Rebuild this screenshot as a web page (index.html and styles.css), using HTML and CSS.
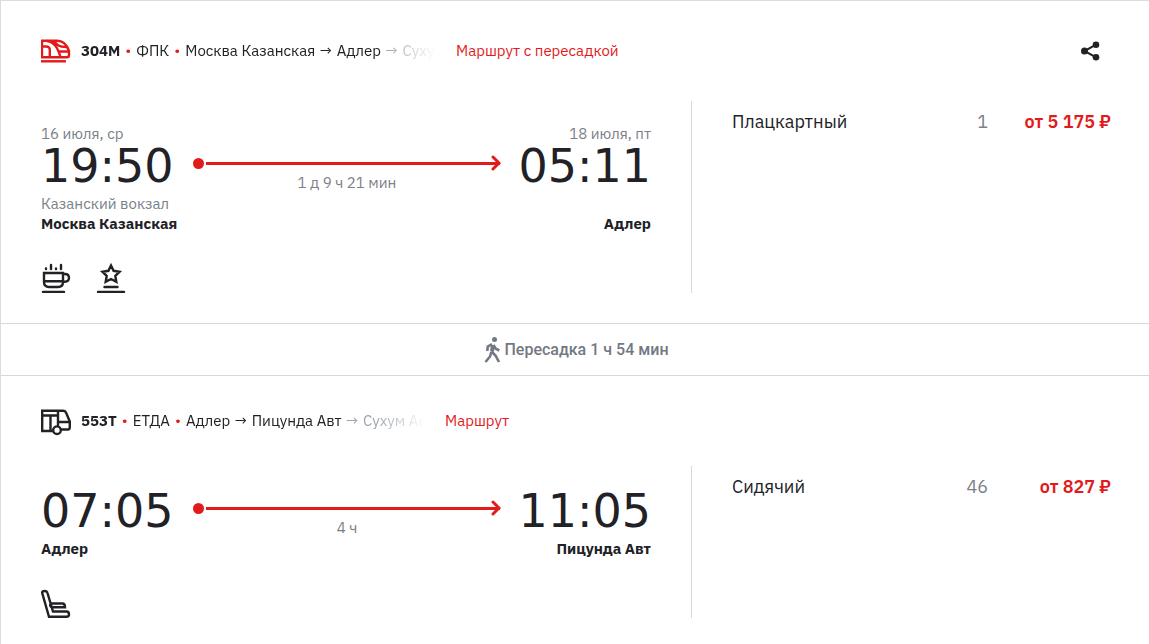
FILE: index.html
```html
<!DOCTYPE html>
<html lang="ru">
<head>
    <meta charset="UTF-8">
    <meta name="viewport" content="width=device-width, initial-scale=1.0">
    <title>Маршрут с пересадкой</title>
    <link rel="stylesheet" href="styles.css">
</head>
<body>
    <main class="trip">
        <section class="card">
            <header class="card-header">
                <svg class="icon icon-red" viewBox="0 0 30 30" aria-hidden="true">
                    <path d="M1 4.7H16C23 4.7 26 9 28 15V19Q28 21.3 26 21.3H1Z"/>
                    <path d="M1 10.5H5Q8.8 10.5 8.8 14V21M6 5C14 6 17 13 19.5 21M13 5C16 9 18 11 25 11M18 15.5H28"/>
                    <path d="M0 25.3H25"/>
                </svg>
                <div class="route">
                    <b>304М</b><i class="dot">•</i><span>ФПК</span><i class="dot">•</i><span>Москва Казанская <span class="arrow">→</span> Адлер <span class="rest"><span class="arrow">→</span> Сухум</span></span>
                </div>
                <a href="#" class="route-link">Маршрут с пересадкой</a>
                <button class="share" aria-label="Поделиться">
                    <svg viewBox="0 0 20 20" aria-hidden="true">
                        <path d="M15 3.7L3.5 10L15 16.3"/>
                        <circle cx="15" cy="3.7" r="3.3"/>
                        <circle cx="3.5" cy="10" r="3.5"/>
                        <circle cx="15" cy="16.3" r="3.3"/>
                    </svg>
                </button>
            </header>
            <div class="card-body">
                <div class="info">
                    <div class="schedule">
                        <span class="date">16 июля, ср</span>
                        <span class="date end">18 июля, пт</span>
                        <time class="time">19:50</time>
                        <div class="duration">
                            <div class="line"><svg viewBox="0 0 11 16" aria-hidden="true"><path d="M3 2L9 8L3 14"/></svg></div>
                            <span>1 д 9 ч 21 мин</span>
                        </div>
                        <time class="time end">05:11</time>
                        <div class="station"><span>Казанский вокзал</span><b>Москва Казанская</b></div>
                        <div class="station end"><b>Адлер</b></div>
                    </div>
                    <div class="services">
                        <svg class="icon" viewBox="0 0 30 30" aria-hidden="true">
                            <path d="M3 10H22V19Q22 24 17 24H8Q3 24 3 19ZM3 18.3H22M22 11H24Q28 11 28 15Q28 19 22 19M2 29H23M5 5.5V6M10 2V6M15 5.5V6M20 2V6"/>
                        </svg>
                        <svg class="icon" viewBox="0 0 30 30" aria-hidden="true">
                            <path d="M15 2.5L17.6 7.8L23.5 8.7L19.3 12.8L20.3 18.8L15 16L9.7 18.8L10.7 12.8L6.5 8.7L12.4 7.8ZM8.5 24H21.5M2 29H28"/>
                        </svg>
                    </div>
                </div>
                <div class="places">
                    <table>
                        <tr>
                            <td>Плацкартный</td>
                            <td class="count">1</td>
                            <td class="price">от 5 175 ₽</td>
                        </tr>
                    </table>
                </div>
            </div>
        </section>

        <div class="transfer">
            <svg viewBox="0 0 17 26" aria-hidden="true">
                <circle cx="10.5" cy="2.5" r="2.5"/>
                <path class="torso" d="M9 8L8 14.5"/>
                <path d="M7.5 14.5L11.5 18.5L15 25M7.3 15L6 19.5L1.5 25M8 7.2L3.8 9.5L3.2 14M9.5 8L11.5 11.5L15.3 13.5"/>
            </svg>
            <span>Пересадка 1 ч 54 мин</span>
        </div>

        <section class="card">
            <header class="card-header">
                <svg class="icon" viewBox="0 0 30 30" aria-hidden="true">
                    <path d="M12 25H1.2V4.7H22Q24 4.7 25 6.5L28.8 15.5V21Q28.8 23.5 27 23.5H20M1 9.5H17M9.5 9.5V24M17 5V19M17 16H29"/>
                    <circle cx="16" cy="24.2" r="3.8"/>
                </svg>
                <div class="route route-bus">
                    <b>553Т</b><i class="dot">•</i><span>ЕТДА</span><i class="dot">•</i><span>Адлер <span class="arrow">→</span> Пицунда Авт <span class="rest"><span class="arrow">→</span> Сухум Авт</span></span>
                </div>
                <a href="#" class="route-link">Маршрут</a>
            </header>
            <div class="card-body">
                <div class="info">
                    <div class="schedule">
                        <time class="time">07:05</time>
                        <div class="duration">
                            <div class="line"><svg viewBox="0 0 11 16" aria-hidden="true"><path d="M3 2L9 8L3 14"/></svg></div>
                            <span>4 ч</span>
                        </div>
                        <time class="time end">11:05</time>
                        <div class="station"><b>Адлер</b></div>
                        <div class="station end"><b>Пицунда Авт</b></div>
                    </div>
                    <div class="services">
                        <svg class="icon" viewBox="0 0 30 30" aria-hidden="true">
                            <path d="M1.2 5Q1 3 3.5 3Q6 3 6.5 5L12 23.5H25.5Q28 23.5 28 26.2Q28 28.8 25.5 28.8H8ZM10 15.5H21.5Q24 15.5 24 19.3H10.5Q8 17.5 10 15.5"/>
                        </svg>
                    </div>
                </div>
                <div class="places">
                    <table>
                        <tr>
                            <td>Сидячий</td>
                            <td class="count">46</td>
                            <td class="price">от 827 ₽</td>
                        </tr>
                    </table>
                </div>
            </div>
        </section>
    </main>
</body>
</html>
```
FILE: styles.css
```css
* {
    box-sizing: border-box;
}
body {
    margin: 0;
    background: #fff;
    color: #212126;
    font-family: "IBM Plex Sans", "Noto Sans", sans-serif;
    font-size: 15px;
    line-height: 20px;
}
.trip {
    border-top: 1px solid #dcdcdf;
    border-left: 1px solid #dcdcdf;
}
.card {
    padding: 30px 38px 30px 40px;
}
.card-header {
    display: flex;
    align-items: center;
    min-height: 30px;
    margin-bottom: 30px;
}
.icon {
    width: 30px;
    height: 30px;
    flex: none;
    fill: none;
    stroke: #212126;
    stroke-width: 2.4;
    stroke-linecap: round;
}
.icon-red {
    stroke: #e21a1a;
    stroke-linecap: butt;
}
.route {
    max-width: 355px;
    margin: 0 20px 0 10px;
    overflow: hidden;
    white-space: nowrap;
    -webkit-mask-image: linear-gradient(to left, transparent, #000 50px);
    mask-image: linear-gradient(to left, transparent, #000 50px);
}
.route-bus {
    max-width: 344px;
}
.rest {
    color: #9ba3ad;
}
.arrow {
    margin: 0 1px;
}
.dot {
    margin: 0 5px;
    color: #e21a1a;
    font-style: normal;
}
.route-link {
    color: #e21a1a;
    text-decoration: none;
}
.share {
    width: 40px;
    height: 40px;
    margin-left: auto;
    padding: 10px;
    border: none;
    background: none;
    cursor: pointer;
}
.share svg {
    display: block;
    fill: #212126;
}
.share path {
    fill: none;
    stroke: #212126;
    stroke-width: 2;
}
.card-body {
    display: grid;
    grid-template-columns: 650fr 420fr;
}
.info {
    padding: 23px 40px 0 0;
}
.schedule {
    display: grid;
    grid-template-columns: 136px 1fr 134px;
    column-gap: 16px;
}
.date {
    color: #7b8187;
}
.date.end {
    grid-column: 3;
}
.time {
    height: 50px;
    font-family: "DejaVu Sans", sans-serif;
    font-size: 46px;
    line-height: 44px;
}
.end {
    text-align: right;
}
.duration {
    padding-top: 13px;
    color: #7b8187;
    text-align: center;
}
.line {
    display: flex;
    align-items: center;
    height: 12px;
    margin-bottom: 4px;
}
.line::before {
    content: "";
    width: 11px;
    height: 11px;
    margin-right: 2px;
    border-radius: 50%;
    background: #e21a1a;
}
.line::after {
    content: "";
    order: 1;
    flex: 1;
    height: 3px;
    background: #e21a1a;
}
.line svg {
    order: 2;
    width: 11px;
    height: 16px;
    margin-left: -10px;
    fill: none;
    stroke: #e21a1a;
    stroke-width: 3;
    stroke-linecap: round;
}
.station {
    display: flex;
    flex-direction: column;
    justify-content: flex-end;
    color: #7b8187;
    white-space: nowrap;
}
.station.end {
    grid-column: 3;
}
.station b {
    color: #212126;
}
.services {
    display: flex;
    gap: 25px;
    margin-top: 29px;
}
.places {
    padding: 8px 0 0 40px;
    border-left: 1px solid #d8d8d8;
}
.places table {
    width: 100%;
    border-collapse: collapse;
    font-size: 18px;
    line-height: 26px;
}
.places td {
    padding: 0;
}
.places .count {
    color: #7b8187;
    text-align: right;
}
.places .price {
    width: 123px;
    color: #e21a1a;
    font-weight: 600;
    text-align: right;
}
.transfer {
    display: flex;
    align-items: center;
    justify-content: center;
    gap: 3px;
    height: 53px;
    padding-left: 3px;
    border-top: 1px solid #d8d8d8;
    border-bottom: 1px solid #d8d8d8;
    color: #727982;
    font-family: Roboto, sans-serif;
    font-size: 16px;
    font-weight: 500;
}
.transfer svg {
    width: 17px;
    height: 26px;
    fill: #727982;
}
.transfer path {
    fill: none;
    stroke: #727982;
    stroke-width: 2.6;
}
.transfer .torso {
    stroke-width: 4;
}
```
